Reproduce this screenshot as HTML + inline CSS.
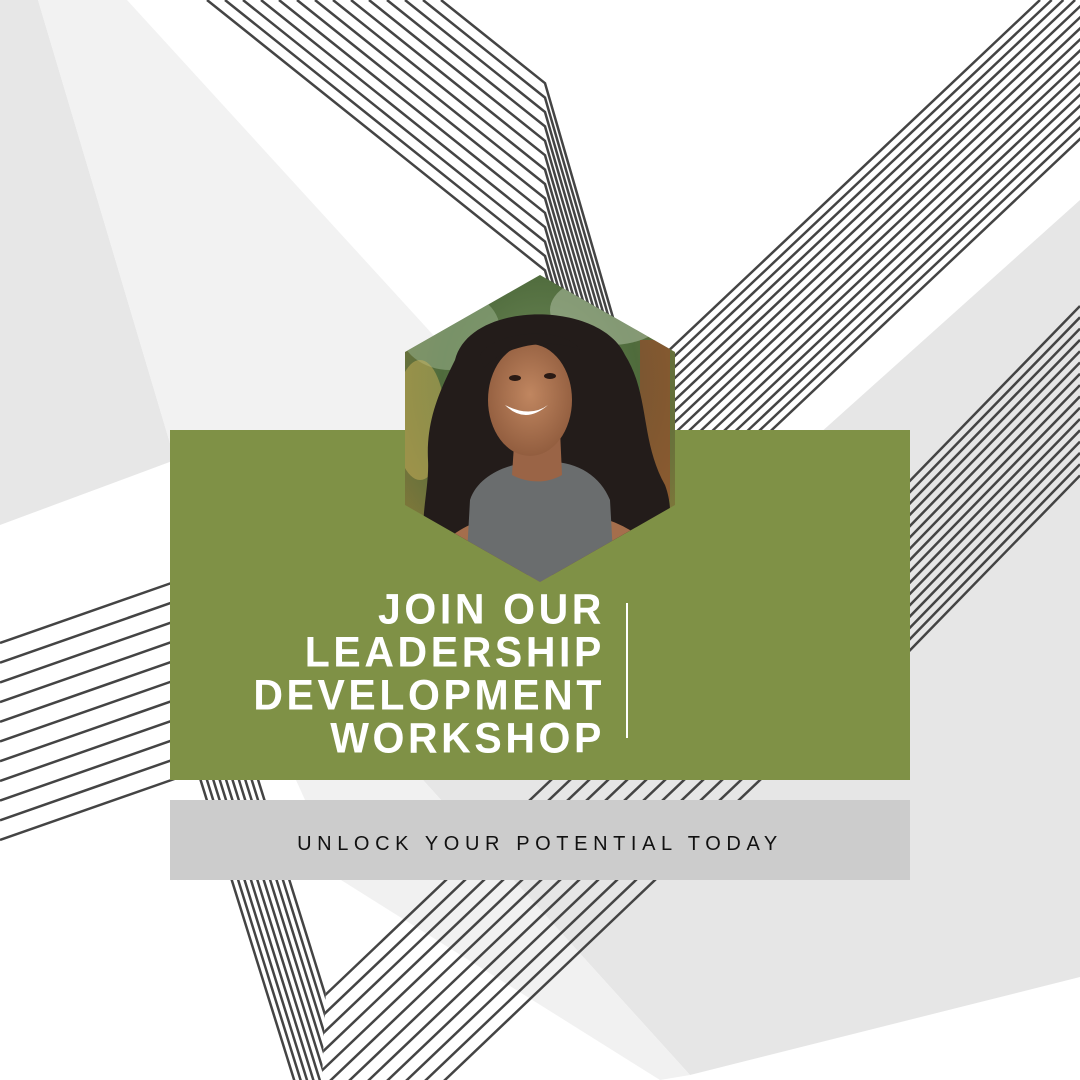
<!DOCTYPE html>
<html><head><meta charset="utf-8"><style>
html,body{margin:0;padding:0;width:1080px;height:1080px;overflow:hidden}
body{position:relative;background:#fff;font-family:"Liberation Sans",sans-serif}
svg{position:absolute;left:0;top:0}
.h{position:absolute;right:475px;color:#fff;font-weight:bold;font-size:41px;letter-spacing:3.6px;line-height:43px;white-space:nowrap;transform:scaleY(1.05)}
</style></head><body>
<svg width="1080" height="1080" viewBox="0 0 1080 1080">
<defs>
<clipPath id="cr"><polygon points="335,780 910,780 910,1080 322,1080"/></clipPath>
<clipPath id="cl"><polygon points="170,780 335,780 322,1080 170,1080"/></clipPath>
<clipPath id="c2"><polygon points="900,250 1080,250 1080,490 909,660 900,660"/></clipPath>
<clipPath id="hex"><polygon points="540,275 675,352 675,505 540,582 405,505 405,352"/></clipPath>
<radialGradient id="bg" cx="0.5" cy="0.35" r="0.7"><stop offset="0" stop-color="#6f8a5a"/><stop offset="0.5" stop-color="#4f6b3c"/><stop offset="1" stop-color="#8a7a3a"/></radialGradient>
<radialGradient id="face" cx="0.5" cy="0.45" r="0.6"><stop offset="0" stop-color="#c08660"/><stop offset="1" stop-color="#8e5a3c"/></radialGradient>
</defs>
<polygon points="0,0 38,0 175,460 0,525" fill="#e7e7e7"/>
<polygon points="38,0 127,0 520,430 175,460" fill="#f2f2f2"/>
<polygon points="1080,200 790,460 790,780 423,780 690,1075 1080,977" fill="#e6e6e6"/>
<polygon points="296,780 423,780 690,1075 660,1080 341,880" fill="#f1f1f1"/>
<g fill="none" stroke="#444" stroke-width="2.5">
<polyline points="207,0 545,270.4 565.2,340"/>
<polyline points="225,0 545,256 569.4,340"/>
<polyline points="243,0 545,241.6 573.5,340"/>
<polyline points="261,0 545,227.2 577.7,340"/>
<polyline points="279,0 545,212.8 581.9,340"/>
<polyline points="297,0 545,198.4 586.1,340"/>
<polyline points="315,0 545,184 590.2,340"/>
<polyline points="333,0 545,169.6 594.4,340"/>
<polyline points="351,0 545,155.2 598.6,340"/>
<polyline points="369,0 545,140.8 602.8,340"/>
<polyline points="387,0 545,126.4 607,340"/>
<polyline points="405,0 545,112 611.1,340"/>
<polyline points="423,0 545,97.6 615.3,340"/>
<polyline points="441,0 545,83.2 619.5,340"/>
<g>
<line x1="1040" y1="0" x2="574" y2="440"/>
<line x1="1051.7" y1="0" x2="585.7" y2="440"/>
<line x1="1063.4" y1="0" x2="597.4" y2="440"/>
<line x1="1075.1" y1="0" x2="609.1" y2="440"/>
<line x1="1086.8" y1="0" x2="620.8" y2="440"/>
<line x1="1098.5" y1="0" x2="632.5" y2="440"/>
<line x1="1110.2" y1="0" x2="644.2" y2="440"/>
<line x1="1121.9" y1="0" x2="655.9" y2="440"/>
<line x1="1133.6" y1="0" x2="667.6" y2="440"/>
<line x1="1145.3" y1="0" x2="679.3" y2="440"/>
<line x1="1157" y1="0" x2="691" y2="440"/>
<line x1="1168.7" y1="0" x2="702.7" y2="440"/>
<line x1="1180.4" y1="0" x2="714.4" y2="440"/>
<line x1="1192.1" y1="0" x2="726.1" y2="440"/>
<line x1="1203.8" y1="0" x2="737.8" y2="440"/>
<line x1="1215.5" y1="0" x2="749.5" y2="440"/>
<line x1="1227.2" y1="0" x2="761.2" y2="440"/>
</g>
<g clip-path="url(#c2)">
<line x1="1080" y1="306" x2="900" y2="491"/>
<line x1="1080" y1="317.3" x2="900" y2="502.3"/>
<line x1="1080" y1="328.6" x2="900" y2="513.6"/>
<line x1="1080" y1="339.9" x2="900" y2="524.9"/>
<line x1="1080" y1="351.2" x2="900" y2="536.2"/>
<line x1="1080" y1="362.5" x2="900" y2="547.5"/>
<line x1="1080" y1="373.8" x2="900" y2="558.8"/>
<line x1="1080" y1="385.1" x2="900" y2="570.1"/>
<line x1="1080" y1="396.4" x2="900" y2="581.4"/>
<line x1="1080" y1="407.7" x2="900" y2="592.7"/>
<line x1="1080" y1="419" x2="900" y2="604"/>
<line x1="1080" y1="430.3" x2="900" y2="615.3"/>
<line x1="1080" y1="441.6" x2="900" y2="626.6"/>
<line x1="1080" y1="452.9" x2="900" y2="637.9"/>
<line x1="1080" y1="464.2" x2="900" y2="649.2"/>
<line x1="1080" y1="475.5" x2="900" y2="660.5"/>
</g>
<line x1="0" y1="643" x2="180" y2="580"/>
<line x1="0" y1="662.7" x2="180" y2="599.7"/>
<line x1="0" y1="682.4" x2="180" y2="619.4"/>
<line x1="0" y1="702.1" x2="180" y2="639.1"/>
<line x1="0" y1="721.8" x2="180" y2="658.8"/>
<line x1="0" y1="741.5" x2="180" y2="678.5"/>
<line x1="0" y1="761.2" x2="180" y2="698.2"/>
<line x1="0" y1="780.9" x2="180" y2="717.9"/>
<line x1="0" y1="800.6" x2="180" y2="737.6"/>
<line x1="0" y1="820.3" x2="180" y2="757.3"/>
<line x1="0" y1="840" x2="180" y2="777"/>
<g clip-path="url(#cr)">
<line x1="635" y1="700" x2="153" y2="1159"/>
<line x1="654" y1="700" x2="172" y2="1159"/>
<line x1="673" y1="700" x2="191" y2="1159"/>
<line x1="692" y1="700" x2="210" y2="1159"/>
<line x1="711" y1="700" x2="229" y2="1159"/>
<line x1="730" y1="700" x2="248" y2="1159"/>
<line x1="749" y1="700" x2="267" y2="1159"/>
<line x1="768" y1="700" x2="286" y2="1159"/>
<line x1="787" y1="700" x2="305" y2="1159"/>
<line x1="806" y1="700" x2="324" y2="1159"/>
<line x1="825" y1="700" x2="343" y2="1159"/>
<line x1="844" y1="700" x2="362" y2="1159"/>
</g>
<g clip-path="url(#cl)">
<line x1="233.2" y1="700" x2="358" y2="1100"/>
<line x1="226.8" y1="700" x2="351.6" y2="1100"/>
<line x1="220.4" y1="700" x2="345.2" y2="1100"/>
<line x1="214" y1="700" x2="338.8" y2="1100"/>
<line x1="207.6" y1="700" x2="332.4" y2="1100"/>
<line x1="201.2" y1="700" x2="326" y2="1100"/>
<line x1="194.8" y1="700" x2="319.6" y2="1100"/>
<line x1="188.4" y1="700" x2="313.2" y2="1100"/>
<line x1="182" y1="700" x2="306.8" y2="1100"/>
<line x1="175.6" y1="700" x2="300.4" y2="1100"/>
</g>
</g>
<rect x="170" y="430" width="740" height="350" fill="#7f9146"/>
<rect x="170" y="800" width="740" height="80" fill="#cccccc"/>
<g clip-path="url(#hex)">
<rect x="400" y="270" width="280" height="320" fill="url(#bg)"/>
<ellipse cx="450" cy="330" rx="50" ry="40" fill="#8aa37a" opacity="0.7"/>
<ellipse cx="610" cy="310" rx="60" ry="35" fill="#a7b89a" opacity="0.6"/>
<rect x="640" y="340" width="30" height="160" fill="#9a4a2a" opacity="0.6"/>
<ellipse cx="420" cy="420" rx="25" ry="60" fill="#c9b25a" opacity="0.5"/>
<path d="M455,360 C470,300 600,300 625,355 C650,395 640,440 665,485 C680,525 660,565 630,575 L440,575 C410,540 430,500 428,460 C426,420 440,390 455,360 Z" fill="#231c1a"/>
<ellipse cx="545" cy="565" rx="110" ry="55" fill="#a56e4c"/>
<path d="M470,500 C480,470 520,460 545,462 C575,460 600,475 610,500 L615,590 L465,590 Z" fill="#6a6d6e"/>
<path d="M515,430 L560,430 L562,475 C545,485 525,482 512,475 Z" fill="#9a6446"/>
<ellipse cx="530" cy="400" rx="42" ry="56" fill="url(#face)"/>
<path d="M505,405 Q525,425 548,405 Q530,418 505,405 Z" fill="#fff"/>
<ellipse cx="515" cy="378" rx="6" ry="3" fill="#2a1a14"/>
<ellipse cx="550" cy="376" rx="6" ry="3" fill="#2a1a14"/>
<path d="M480,355 C495,330 565,325 580,350 C560,340 510,340 484,368 Z" fill="#231c1a"/>
</g>
<rect x="626" y="603" width="2" height="135" fill="#fff"/>
</svg>
<div class="h" style="top:588px">JOIN OUR</div>
<div class="h" style="top:631px">LEADERSHIP</div>
<div class="h" style="top:674px">DEVELOPMENT</div>
<div class="h" style="top:717px">WORKSHOP</div>
<div style="position:absolute;left:170px;width:740px;top:833px;text-align:center;font-size:20px;letter-spacing:5.6px;color:#111;white-space:nowrap">UNLOCK YOUR POTENTIAL TODAY</div>
</body></html>
